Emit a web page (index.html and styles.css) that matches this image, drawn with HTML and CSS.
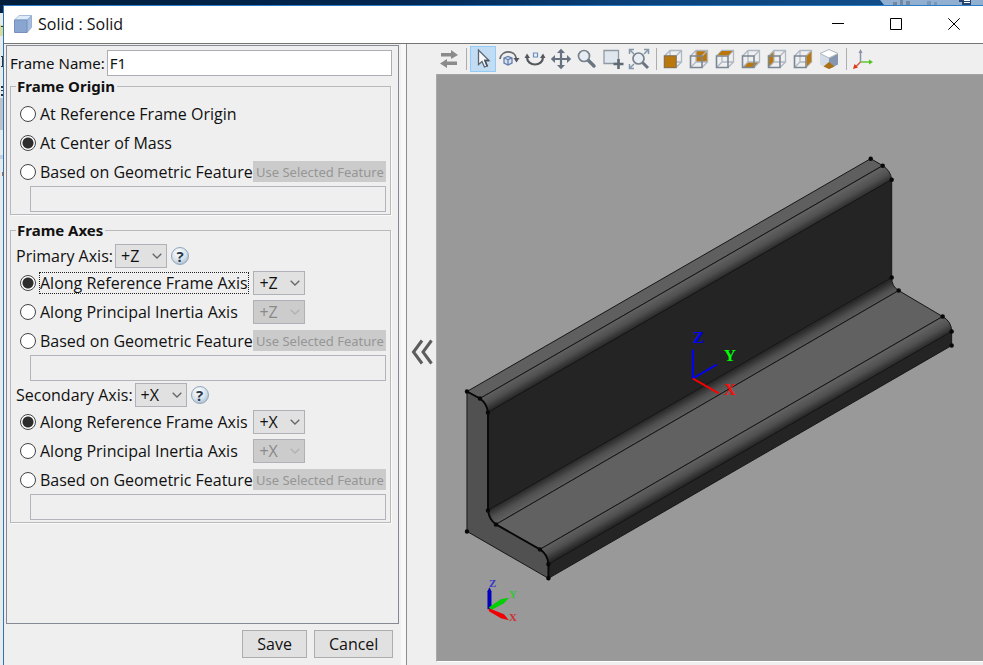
FILE: index.html
```html
<!DOCTYPE html>
<html lang="en">
<head>
<meta charset="utf-8">
<title>Solid : Solid</title>
<link rel="stylesheet" href="styles.css">
</head>
<body>
<svg class="symbols" aria-hidden="true">
  <defs>
    <symbol id="chevron" viewBox="0 0 10 6"><path d="M.7.7 5 5 9.300.7" fill="none" stroke="currentColor" stroke-width="1.300"/></symbol>
    <symbol id="cube" viewBox="0 0 20 20">
      <path d="M7 1.500H18.500V13H7Z M1.500 7 7 1.500 M13 7l5.500-5.500 M13 18.500l5.500-5.500 M1.500 18.500 7 13" fill="none" stroke="#aeb8c3" stroke-width="1.300"/>
      <path d="M1.500 7H13V18.500H1.500Z" fill="none" stroke="#7b8794" stroke-width="1.600"/>
    </symbol>
  </defs>
</svg>

<div class="desktop-top" aria-hidden="true">
  <svg class="desktop-tray" viewBox="0 0 103 5" preserveAspectRatio="none"><path d="M0 0H103V5H4Z" fill="#91afd0"/><path d="M13 2h4v3h-4zM20 0h3v5h-3zM26 1h4v4h-4z" fill="#73879f"/><path d="M47 1h4v4h-4zM54 2h3v3h-3z" fill="#7896ba"/><path d="M79 0h12v5H82V2h-3z" fill="#27456e"/><path d="M84 0h6v1h-6zM84 2h6v1h-6z" fill="#fff"/></svg>
</div>

<div class="desktop">
  <svg class="desktop-edge" aria-hidden="true" viewBox="0 0 3 660" preserveAspectRatio="none"><path d="M0 0H3V8H0Z" fill="#022244"/><path d="M0 8H3V20H0ZM0 31H3V660H0Z" fill="#e9eaec"/><path d="M0 20H3V31H0Z" fill="#d6dc9c"/><path d="M1 21H3V22H1ZM1 51H3V52H1ZM2 51H3V61H2ZM1 61H3V62H1ZM1 81H3V83H1ZM1 85H3V86H1ZM1 89H3V91H1Z" fill="#333"/><path d="M0 93H3V125H0Z" fill="#bfc3c8"/><path d="M0 150H3V154H0Z" fill="#c4d0dc"/><path d="M2 167H3V171H2Z" fill="#b06a38"/></svg>

  <div class="window">
    <header class="titlebar">
      <svg class="app-icon" viewBox="0 0 18 18" aria-hidden="true"><path d="M.5 5 5 .5H17.500L13 5Z" fill="#dcecfa" stroke="#a9bedb"/><path d="M13 5 17.500.5V12.500L13 17.500Z" fill="#a3bbdd" stroke="#9bb1d3"/><path d="M.5 5H13V17.500H.5Z" fill="#88a6cf" stroke="#7891bb"/></svg>
      <h1 class="title">Solid : Solid</h1>
      <div class="window-controls">
        <button type="button" aria-label="Minimize"><svg viewBox="0 0 12 12"><path d="M0 5.500H12" /></svg></button>
        <button type="button" aria-label="Maximize"><svg viewBox="0 0 12 12"><path d="M.5.500H11.500V11.500H.5Z"/></svg></button>
        <button type="button" aria-label="Close"><svg viewBox="0 0 12 12"><path d="M.3.300 11.700 11.700M11.700.300.300 11.700"/></svg></button>
      </div>
    </header>

    <div class="content">
      <form class="sidebar">
        <div class="panel">
          <div class="name-row">
            <label for="frame-name">Frame Name:</label>
            <input id="frame-name" type="text" value="F1">
          </div>

          <fieldset class="group">
            <legend>Frame Origin</legend>
            <div class="row"><label class="choice"><input type="radio" name="origin"><span>At Reference Frame Origin</span></label></div>
            <div class="row"><label class="choice"><input type="radio" name="origin" checked><span>At Center of Mass</span></label></div>
            <div class="row"><label class="choice"><input type="radio" name="origin"><span>Based on Geometric Feature</span></label><button type="button" class="feature-button" disabled>Use Selected Feature</button></div>
            <input class="feature" type="text" aria-label="Origin feature" disabled>
          </fieldset>

          <fieldset class="group">
            <legend>Frame Axes</legend>
            <div class="axis-row">
              <label for="primary">Primary Axis:</label>
              <span class="select"><select id="primary"><option>+Z</option></select><svg><use href="#chevron"/></svg></span>
              <button type="button" class="help">?</button>
            </div>
            <div class="row"><label class="choice focused"><input type="radio" name="primary-by" checked><span>Along Reference Frame Axis</span></label><span class="select"><select aria-label="Primary reference axis"><option>+Z</option></select><svg><use href="#chevron"/></svg></span></div>
            <div class="row"><label class="choice"><input type="radio" name="primary-by"><span>Along Principal Inertia Axis</span></label><span class="select off"><select aria-label="Primary inertia axis" disabled><option>+Z</option></select><svg><use href="#chevron"/></svg></span></div>
            <div class="row"><label class="choice"><input type="radio" name="primary-by"><span>Based on Geometric Feature</span></label><button type="button" class="feature-button" disabled>Use Selected Feature</button></div>
            <input class="feature" type="text" aria-label="Primary axis feature" disabled>

            <div class="axis-row">
              <label for="secondary">Secondary Axis:</label>
              <span class="select"><select id="secondary"><option>+X</option></select><svg><use href="#chevron"/></svg></span>
              <button type="button" class="help">?</button>
            </div>
            <div class="row"><label class="choice"><input type="radio" name="secondary-by" checked><span>Along Reference Frame Axis</span></label><span class="select"><select aria-label="Secondary reference axis"><option>+X</option></select><svg><use href="#chevron"/></svg></span></div>
            <div class="row"><label class="choice"><input type="radio" name="secondary-by"><span>Along Principal Inertia Axis</span></label><span class="select off"><select aria-label="Secondary inertia axis" disabled><option>+X</option></select><svg><use href="#chevron"/></svg></span></div>
            <div class="row"><label class="choice"><input type="radio" name="secondary-by"><span>Based on Geometric Feature</span></label><button type="button" class="feature-button" disabled>Use Selected Feature</button></div>
            <input class="feature" type="text" aria-label="Secondary axis feature" disabled>
          </fieldset>
        </div>
        <div class="actions">
          <button type="button">Save</button>
          <button type="button">Cancel</button>
        </div>
      </form>

      <button type="button" class="collapse" aria-label="Collapse panel"><svg viewBox="0 0 22 26"><path d="M11 1.500 2.500 13 11 24.500M20.500 1.500 12 13l8.500 11.500" fill="none" stroke="#5c5c5c" stroke-width="3"/></svg></button>

      <main class="viewer">
        <div class="toolbar" role="toolbar" aria-label="View tools">
          <button type="button" aria-label="Swap view"><svg viewBox="0 0 20 20"><path d="M2 4H12V1L19 6 12 10V7.500H2ZM18 12.500H8V10L1 14.500 8 19V16H18Z" fill="#8b8b8b"/></svg></button>
          <i></i>
          <button type="button" class="active" aria-label="Select"><svg viewBox="0 0 20 20"><path d="M5.500 1V15.500L9 12.500 11.500 18 14 17 11.800 11.500H16Z" fill="#f7f9fb" stroke="#5b6470" stroke-width="1.300"/><path d="M16 11.500H12L14.500 17.500" fill="none" stroke="#4c535c" stroke-width="1.500"/></svg></button>
          <button type="button" aria-label="Rotate"><svg viewBox="0 0 20 20"><path d="M1 10C2 1 16 0 17.500 10" fill="none" stroke="#64686d" stroke-width="1.700"/><path d="M14.500 9H20.500L17.500 13.500Z" fill="#53575c"/><path d="M5 9 9 7.500 13 9V14L9 16 5 14ZM5 9 9 10.500 13 9M9 10.500V16" fill="#d9e2f0" stroke="#637fac" stroke-width="1.300"/></svg></button>
          <button type="button" aria-label="Roll"><svg viewBox="0 0 20 20"><path d="M2 8C2 18 18 18 18 8" fill="none" stroke="#55585c" stroke-width="2.200"/><path d="M-.5 9 2 4.500 5 9ZM15 9 18 4.500 20.500 9Z" fill="#55585c"/><path d="M8.500 4h4v4h-4Z" fill="#eaf1fa" stroke="#6a8fbd" stroke-width="1.200"/></svg></button>
          <button type="button" aria-label="Pan"><svg viewBox="0 0 20 20"><path d="M10 1V19M1 10H19" stroke="#66727f" stroke-width="2.200"/><path d="M10-.2 14 4H6ZM10 20.200 6 16H14ZM-.2 10 4 6V14ZM20.200 10 16 14V6Z" fill="#66727f"/></svg></button>
          <button type="button" aria-label="Zoom"><svg viewBox="0 0 20 20"><path d="m11 11 6 6" stroke="#697582" stroke-width="3.400" stroke-linecap="round"/><circle cx="7" cy="7" r="5.500" fill="#e7edf3" stroke="#78828d" stroke-width="1.700"/></svg></button>
          <button type="button" aria-label="Zoom region"><svg viewBox="0 0 20 20"><path d="M1 1.500H15.500V14.500H1Z" fill="#dfe6ed" stroke="#919aa4" stroke-width="1.300"/><path d="M15.500 10V20M10.500 15H20.500" stroke="#5f6a75" stroke-width="2.600"/></svg></button>
          <button type="button" aria-label="Fit to view"><svg viewBox="0 0 20 20"><path d="M.5 5V.5H5M15 .5H19.500V5M5 19.500H.5V15M.5.5 5 5M19.500.5 15 5M.5 19.500 5 15" fill="none" stroke="#8497ab" stroke-width="1.500"/><path d="m13 13 6 6" stroke="#697582" stroke-width="3"/><circle cx="9.500" cy="9.500" r="5.500" fill="#e7edf3" stroke="#78828d" stroke-width="1.700"/></svg></button>
          <i></i>
          <button type="button" aria-label="Front view"><svg viewBox="0 0 20 20"><use href="#cube"/><path d="M1.500 7H13V18.500H1.500Z" fill="#b9770e" stroke="#8e7042"/></svg></button>
          <button type="button" aria-label="Back view"><svg viewBox="0 0 20 20"><path d="M7 1.500H18.500V13H7Z" fill="#b9770e"/><use href="#cube"/></svg></button>
          <button type="button" aria-label="Top view"><svg viewBox="0 0 20 20"><use href="#cube"/><path d="M2.500 6.200 6.500 2H17.500L13.500 6.200Z" fill="#b9770e"/></svg></button>
          <button type="button" aria-label="Bottom view"><svg viewBox="0 0 20 20"><path d="M1.500 18.500 7 13H18.500L13 18.500Z" fill="#b9770e"/><use href="#cube"/></svg></button>
          <button type="button" aria-label="Left view"><svg viewBox="0 0 20 20"><path d="M1.500 7 7 1.500V13L1.500 18.500Z" fill="#b9770e"/><use href="#cube"/></svg></button>
          <button type="button" aria-label="Right view"><svg viewBox="0 0 20 20"><use href="#cube"/><path d="M13.800 7 18.300 2.500V12.500L13.800 17.500Z" fill="#b9770e"/></svg></button>
          <button type="button" aria-label="Isometric view"><svg viewBox="0 0 20 20"><path d="M1 4.500 10 9V20L1 15.500Z" fill="#d3dce7"/><path d="M10 9 19 4.500V15.500L10 20Z" fill="#8696ae"/><path d="M1 4.500 10 .5 19 4.500 10 9Z" fill="#fff" stroke="#adb5be"/><path d="M10 13 15.500 17.500 10 20 4.500 17.500Z" fill="#ac7114"/></svg></button>
          <i></i>
          <button type="button" aria-label="Show axes"><svg viewBox="0 0 20 20"><path d="M7.500 13V3" stroke="#8793aa" stroke-width="1.500"/><path d="M5.500 4 7.500 0 9.500 4Z" fill="#8793aa"/><path d="M7.500 13H17" stroke="#63c63b" stroke-width="1.500"/><path d="M16 10.500 20 13 16 15.500Z" fill="#50c51f"/><path d="M7.500 13 3 17.500" stroke="#d85b40" stroke-width="1.500"/><path d="M0 20 1.500 15 5 18.500Z" fill="#df3517"/></svg></button>
        </div>

        <div class="scene">
          <svg viewBox="437 75 546 585" role="img" aria-label="Angle profile solid with frame axes">
            <defs>
              <linearGradient id="round-top" gradientUnits="userSpaceOnUse" x1="480" y1="398" x2="488" y2="412"><stop offset="0" stop-color="#606060"/><stop offset=".45" stop-color="#505050"/><stop offset="1" stop-color="#242424"/></linearGradient>
              <linearGradient id="round-inner" gradientUnits="userSpaceOnUse" x1="488" y1="510" x2="496" y2="524"><stop offset="0" stop-color="#292929"/><stop offset=".5" stop-color="#505050"/><stop offset="1" stop-color="#616161"/></linearGradient>
              <linearGradient id="round-edge" gradientUnits="userSpaceOnUse" x1="540" y1="549" x2="548" y2="563"><stop offset="0" stop-color="#606060"/><stop offset=".45" stop-color="#505050"/><stop offset="1" stop-color="#242424"/></linearGradient>
            </defs>
            <g stroke="#161616" stroke-width="1" stroke-linejoin="round">
              <path d="M467 391 871 158 883 165 480 398Z" fill="#5f5f5f"/>
              <path d="M480 398 883 165Q891 170 892 179L488 412Q487 403 480 398Z" fill="url(#round-top)"/>
              <path d="M488 412 892 179V277L488 510Z" fill="#242424"/>
              <path d="M488 510 892 277Q892 286 899 290L496 524Q489 519 488 510Z" fill="url(#round-inner)"/>
              <path d="M496 524 899 290 943 316 540 549Z" fill="#616161"/>
              <path d="M540 549 943 316Q952 321 952 331L548.500 564Q548 554 540 549Z" fill="url(#round-edge)"/>
              <path d="M548.500 564 952 331V345L548.500 578Z" fill="#242424"/>
              <path d="M467 391 480 398Q487 403 488 412V510Q489 519 496 524L540 549Q548 554 548.500 564V578L467 531Z" fill="#515151"/>
            </g>
            <path d="M467 391 480 398Q487 403 488 412V510Q489 519 496 524L540 549Q548 554 548.500 564V578" fill="none" stroke="#080808" stroke-width="1.800"/>
            <path d="M467 391h0M480 398h0M488 412h0M488 510h0M496 524h0M540 549h0M548.500 564h0M548.500 578h0M467 531h0M871 158h0M883 165h0M892 179h0M892 277h0M899 290h0M943 316h0M952 331h0M952 345h0" stroke="#080808" stroke-width="4.500" stroke-linecap="round"/>
            <g fill="none" stroke-width="2"><path d="M693 378V349" stroke="#00f"/><path d="M693 378 717 364" stroke="#00f"/><path d="M693 378 719 393" stroke="#f00"/></g>
            <g class="axis-label"><text x="693" y="342" fill="#00f">Z</text><text x="724" y="360" fill="#0f0">Y</text><text x="724" y="395" fill="#f01010">X</text></g>
            <path d="M487.500 609V591L489.500 587 491.500 591V609Z" fill="#0000bd"/>
            <path d="M489 607 501 599 509 597.500 504 603 491 610Z" fill="#00cf00"/>
            <path d="M489 608 504 614 509 620 501 618 489 611Z" fill="#f00000"/>
            <g class="axis-label small"><text x="489" y="587" fill="#3838c8">Z</text><text x="509" y="598" fill="#35c535">Y</text><text x="509" y="621" fill="#cf3030">X</text></g>
          </svg>
        </div>
      </main>
    </div>
  </div>
</div>
</body>
</html>
```

FILE: styles.css
```css
* { box-sizing: border-box; }

body {
  margin: 0;
  height: 100vh;
  display: flex;
  flex-direction: column;
  overflow: hidden;
  background: #efefef;
  color: #111;
  font: 16px/20px "Open Sans", "Noto Sans", sans-serif;
}

button, input, select { font: inherit; color: inherit; margin: 0; border-radius: 0; }
button { padding: 0; border: 0; background: none; }
.symbols { position: absolute; width: 0; height: 0; }

.desktop-top {
  display: flex;
  justify-content: flex-end;
  height: 5px;
  flex: none;
  background: linear-gradient(90deg, #001e3b, #022650 40%, #0b427c 66%, #12528f);
}
.desktop-tray { width: 103px; height: 5px; }
.desktop { display: flex; flex: 1; min-height: 0; }
.desktop-edge { width: 3px; height: 100%; flex: none; }

.window {
  flex: 1;
  min-width: 0;
  display: flex;
  flex-direction: column;
  border-top: 1px solid #2a7cc7;
  border-left: 1px solid #2a75b5;
}

.titlebar {
  display: flex;
  align-items: center;
  height: 38px;
  flex: none;
  padding: 0 0 2px 10px;
  background: #fff;
  border-bottom: 1px solid #747474;
}
.app-icon { width: 18px; height: 18px; }
.title { margin: 0 0 0 6px; font-size: 16px; font-weight: 400; }
.window-controls { display: flex; margin-left: auto; }
.window-controls button { width: 58px; height: 34px; }
.window-controls svg { display: block; width: 12px; height: 12px; margin: auto; fill: none; stroke: #000; }

.content { flex: 1; min-height: 0; display: flex; }

.sidebar {
  flex: 0 0 calc(41% + 1px);
  display: flex;
  flex-direction: column;
  padding: 1px 2px 0 2px;
  border-right: 5px solid #f8f8f8;
}
.panel {
  flex: 1;
  min-height: 0;
  padding: 3px 6px 0 3px;
  border: 1px solid #858993;
}
.name-row { display: flex; align-items: center; height: 27px; gap: 2px; font-family: "Noto Sans", sans-serif; font-size: 15px; }
.name-row input { flex: 1; min-width: 0; height: 26px; padding: 0 2px; background: #fff; border: 1px solid #abadb3; }

.group {
  min-width: 0;
  margin: 0 1px 5px 0;
  padding: 3px 4px 1px 5px;
  border: 1px solid #b8b9bc;
  box-shadow: 1px 1px 0 #fafafa;
}
.group legend { margin: 0; padding: 0 2px 0 1px; font-family: "Noto Sans", sans-serif; font-size: 15px; font-weight: 700; }

.row { display: grid; grid-template-columns: 1fr 133px; align-items: center; height: 29px; padding-left: 4px; }
.choice { display: flex; align-items: center; gap: 4px; white-space: nowrap; }
.choice input {
  appearance: none;
  width: 16px;
  height: 16px;
  flex: none;
  border: 1px solid #444;
  border-radius: 50%;
  background: #fff;
}
.choice input:checked { background: radial-gradient(circle, #2d2d2d 5px, #fff 6px); }
.focused span { outline: 1px dotted #222; }

.feature-button { height: 21px; font-family: "Noto Sans", sans-serif; font-size: 13px; line-height: 20px; color: #969696; background: #cbcbcb; white-space: nowrap; }
.feature {
  display: block;
  width: calc(100% - 14px);
  height: 26px;
  margin: 0 0 1px 14px;
  background: #efefef;
  border: 1px solid #b3b4b9;
}

.axis-row { display: flex; align-items: center; height: 25px; gap: 2px; }
.select { position: relative; display: block; width: 52px; height: 24px; }
.select select {
  appearance: none;
  width: 100%;
  height: 100%;
  padding: 0 0 0 5px;
  background: #e1e1e1;
  border: 1px solid #afb1b7;
}
.select svg { position: absolute; right: 5px; top: 9px; width: 10px; height: 6px; color: #666; pointer-events: none; }
.select.off select { background: #cccccc; color: #898989; opacity: 1; }
.select.off svg { color: #b2b2b2; }
.help {
  width: 18px;
  height: 18px;
  margin-left: 2px;
  border: 1px solid #91a6b9;
  border-radius: 50%;
  background: radial-gradient(circle at 40% 30%, #fff, #d5e0ea 55%, #8ba6bf);
  color: #26384c;
  font-size: 15px;
  font-weight: 700;
  line-height: 16px;
}

.actions { display: flex; justify-content: flex-end; gap: 7px; padding: 6px 6px 7px; }
.actions button { height: 28px; padding: 0 14px; border: 1px solid #adadad; background: #e1e1e1; }

.collapse { width: 30px; flex: none; padding-bottom: 5px; border-left: 1px solid #8c8e92; }
.collapse svg { display: block; width: 22px; height: 26px; margin: auto; }

.viewer { flex: 1; min-width: 0; display: flex; flex-direction: column; }
.toolbar { display: flex; align-items: center; height: 30px; flex: none; }
.toolbar button { display: grid; place-items: center; width: 26px; height: 26px; flex: none; }
.toolbar svg { width: 20px; height: 20px; overflow: visible; }
.toolbar .active { background: #c1dcf3; border: 1px solid #91cbf6; }
.toolbar i { width: 1px; height: 22px; margin: 0 3px 0 4px; flex: none; background: #adadad; }

.scene {
  flex: 1;
  min-height: 0;
  margin-bottom: 3px;
  background: #999;
  border-left: 1px solid #aaa;
  border-top: 1px solid #a3a3a3;
  border-bottom: 1px solid #fff;
}
.scene svg { display: block; width: 100%; height: 100%; }
.axis-label { font: 700 17px "Liberation Serif", serif; }
.axis-label.small { font-size: 11px; }
```
